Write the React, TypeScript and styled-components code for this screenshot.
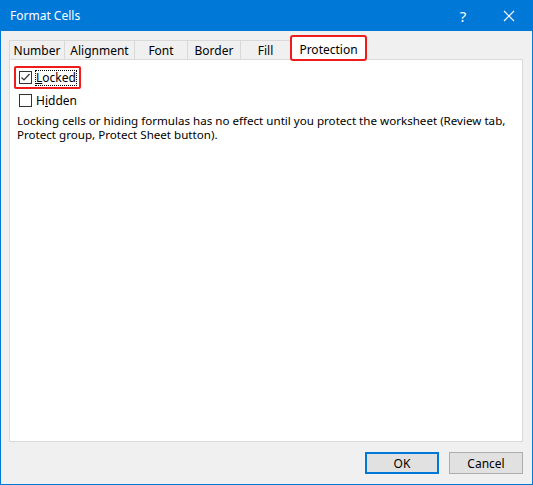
import styled, { createGlobalStyle } from "styled-components";

const Global = createGlobalStyle`
  html, body { margin: 0; padding: 0; }
  body { font-family: "Noto Sans", "Liberation Sans", sans-serif; font-size: 12px; color: #000; }
`;

const Window = styled.div`
  width: 533px;
  height: 485px;
  box-sizing: border-box;
  border: 1px solid #0078d7;
  border-top: none;
  background: #f0f0f0;
  display: flex;
  flex-direction: column;
`;

const TitleBar = styled.div`
  height: 31px;
  background: #0078d7;
  color: #fff;
  display: flex;
  align-items: center;
  padding-left: 9px;
  font-size: 12px;
`;

const Title = styled.div`
  flex: 1;
`;

const TitleButton = styled.div`
  width: 46px;
  height: 31px;
  display: flex;
  align-items: center;
  justify-content: center;
  font-size: 15px;
`;

const Body = styled.div`
  flex: 1;
  display: flex;
  flex-direction: column;
  padding: 5px 9px 0 8px;
`;

const Tabs = styled.div`
  display: flex;
  align-items: flex-end;
  height: 24px;
  position: relative;
  z-index: 1;
`;

const Tab = styled.div<{ $w: number; $active?: boolean }>`
  width: ${(p) => p.$w}px;
  height: ${(p) => (p.$active ? 24 : 20)}px;
  box-sizing: border-box;
  border: 1px solid #d9d9d9;
  border-bottom: ${(p) => (p.$active ? "none" : "1px solid #d9d9d9")};
  border-left: ${(p) => (p.$active ? "1px solid #d9d9d9" : "none")};
  background: ${(p) => (p.$active ? "#fff" : "#f0f0f0")};
  display: flex;
  align-items: center;
  justify-content: center;
  padding-top: ${(p) => (p.$active ? 2 : 1)}px;
  outline: ${(p) => (p.$active ? "2px solid #f01b1b" : "none")};
  outline-offset: -1px;
  border-radius: ${(p) => (p.$active ? "2px" : "0")};
  &:first-child { border-left: 1px solid #d9d9d9; }
`;

const Panel = styled.div`
  height: 383px;
  background: #fff;
  border: 1px solid #d9d9d9;
  margin-top: -1px;
  padding: 6px 7px;
  box-sizing: border-box;
  display: flex;
  flex-direction: column;
  align-items: flex-start;
`;

const CheckRow = styled.div<{ $marked?: boolean }>`
  display: flex;
  align-items: center;
  gap: 4px;
  height: 19px;
  padding: 0 3px;
  margin-left: -3px;
  border: 2px solid ${(p) => (p.$marked ? "#f01b1b" : "transparent")};
  border-radius: 2px;
`;

const Box = styled.div`
  width: 13px;
  height: 13px;
  box-sizing: border-box;
  border: 1px solid #333;
  display: flex;
  align-items: center;
  justify-content: center;
`;

const Label = styled.span<{ $focus?: boolean }>`
  outline: ${(p) => (p.$focus ? "1px dotted #000" : "none")};
  line-height: 14px;
`;

const Note = styled.p`
  margin: 2px 0 0;
  line-height: 13.5px;
  font-size: 11.6px;
`;

const Footer = styled.div`
  display: flex;
  justify-content: flex-end;
  gap: 10px;
  padding: 10px 0 0;
`;

const Button = styled.button<{ $default?: boolean }>`
  width: 74px;
  height: 22px;
  font: inherit;
  background: #e1e1e1;
  border: ${(p) => (p.$default ? "2px solid #0078d7" : "1px solid #adadad")};
  padding: 0;
`;

export default function App() {
  return (
    <Window>
      <Global />
      <TitleBar>
        <Title>Format Cells</Title>
        <TitleButton>?</TitleButton>
        <TitleButton>
          <svg width="12" height="12" viewBox="0 0 12 12">
            <path d="M1 1L11 11M11 1L1 11" stroke="#fff" strokeWidth="1.2" />
          </svg>
        </TitleButton>
      </TitleBar>
      <Body>
        <Tabs>
          <Tab $w={56}>Number</Tab>
          <Tab $w={70}>Alignment</Tab>
          <Tab $w={53}>Font</Tab>
          <Tab $w={53}>Border</Tab>
          <Tab $w={50}>Fill</Tab>
          <Tab $w={75} $active>Protection</Tab>
        </Tabs>
        <Panel>
          <CheckRow $marked>
            <Box>
              <svg width="11" height="11" viewBox="0 0 11 11">
                <path d="M1.5 5.5L4 8L9.5 2" stroke="#333" strokeWidth="1.2" fill="none" />
              </svg>
            </Box>
            <Label $focus><u>L</u>ocked</Label>
          </CheckRow>
          <CheckRow>
            <Box />
            <Label>H<u>i</u>dden</Label>
          </CheckRow>
          <Note>
            Locking cells or hiding formulas has no effect until you protect the worksheet (Review tab,
            <br />
            Protect group, Protect Sheet button).
          </Note>
        </Panel>
        <Footer>
          <Button $default>OK</Button>
          <Button>Cancel</Button>
        </Footer>
      </Body>
    </Window>
  );
}
